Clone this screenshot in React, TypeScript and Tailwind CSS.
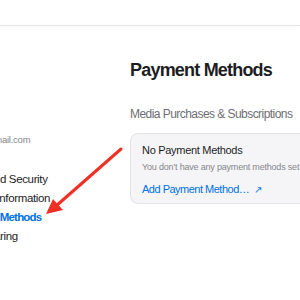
import React from 'react';

const navItems = [
  { label: 'Sign-In and Security', className: 'text-[#1d1d1f] tracking-[-0.35px]' },
  { label: 'Personal Information', className: 'text-[#1d1d1f] tracking-[-0.35px]' },
  { label: 'Payment Methods', className: 'ml-[4px] font-bold text-[#0071e3] tracking-[-0.8px]' },
  { label: 'Family Sharing', className: '-ml-[5px] text-[#1d1d1f] tracking-[-0.35px]' },
];

export default function App() {
  return (
    <div className="relative w-[300px] h-[300px] overflow-hidden bg-white text-[#1d1d1f] font-['Liberation_Sans',Arial,sans-serif]">
      {/* top bar */}
      <div className="h-[26px] border-b border-[#e6e6e6] shadow-[0_1px_2px_rgba(0,0,0,0.03)]" />

      <div className="flex">
        {/* sidebar, cut off on the left */}
        <div className="w-[130px] flex-none overflow-hidden">
          <div className="-ml-[49px] pt-[107px] w-[179px]">
            <div className="text-[9.5px] leading-[14px] text-[#86868b] tracking-[-0.25px]">appleid@gmail.com</div>
            <ul className="mt-[22.5px] flex flex-col">
              {navItems.map((item) => (
                <li key={item.label} className={'text-[11.5px] leading-[19.3px] ' + item.className}>
                  {item.label}
                </li>
              ))}
            </ul>
          </div>
        </div>

        {/* main */}
        <div className="flex-1 min-w-0 pt-[33px]">
          <h1 className="text-[18px] leading-[22px] font-bold tracking-[-0.8px]">Payment Methods</h1>
          <h2 className="mt-[25px] text-[12px] leading-[16px] text-[#6e6e73] tracking-[-0.55px]">
            Media Purchases &amp; Subscriptions
          </h2>
          <div className="mt-[11px] w-[240px] rounded-[8px] border border-[#e3e3e6] bg-[#f5f5f7] pl-[11px] pt-[9px] pb-[6px] whitespace-nowrap">
            <div className="text-[11px] leading-[15px] tracking-[-0.3px]">No Payment Methods</div>
            <div className="mt-[3px] text-[9px] leading-[13px] text-[#86868b] tracking-[-0.2px]">
              You don&rsquo;t have any payment methods set up.
            </div>
            <div className="mt-[8px] text-[11px] leading-[15px] text-[#0071e3] tracking-[-0.5px]">
              Add Payment Method… <span className="ml-[2px] text-[10px]">↗</span>
            </div>
          </div>
        </div>
      </div>

      {/* annotation arrow */}
      <svg className="absolute left-0 top-0 pointer-events-none" width="300" height="300" viewBox="0 0 300 300">
        <line x1="121" y1="149" x2="56" y2="206" stroke="#ee3124" strokeWidth="3" strokeLinecap="round" />
        <polygon points="46,214 53,199 63,210" fill="#ee3124" />
      </svg>
    </div>
  );
}
